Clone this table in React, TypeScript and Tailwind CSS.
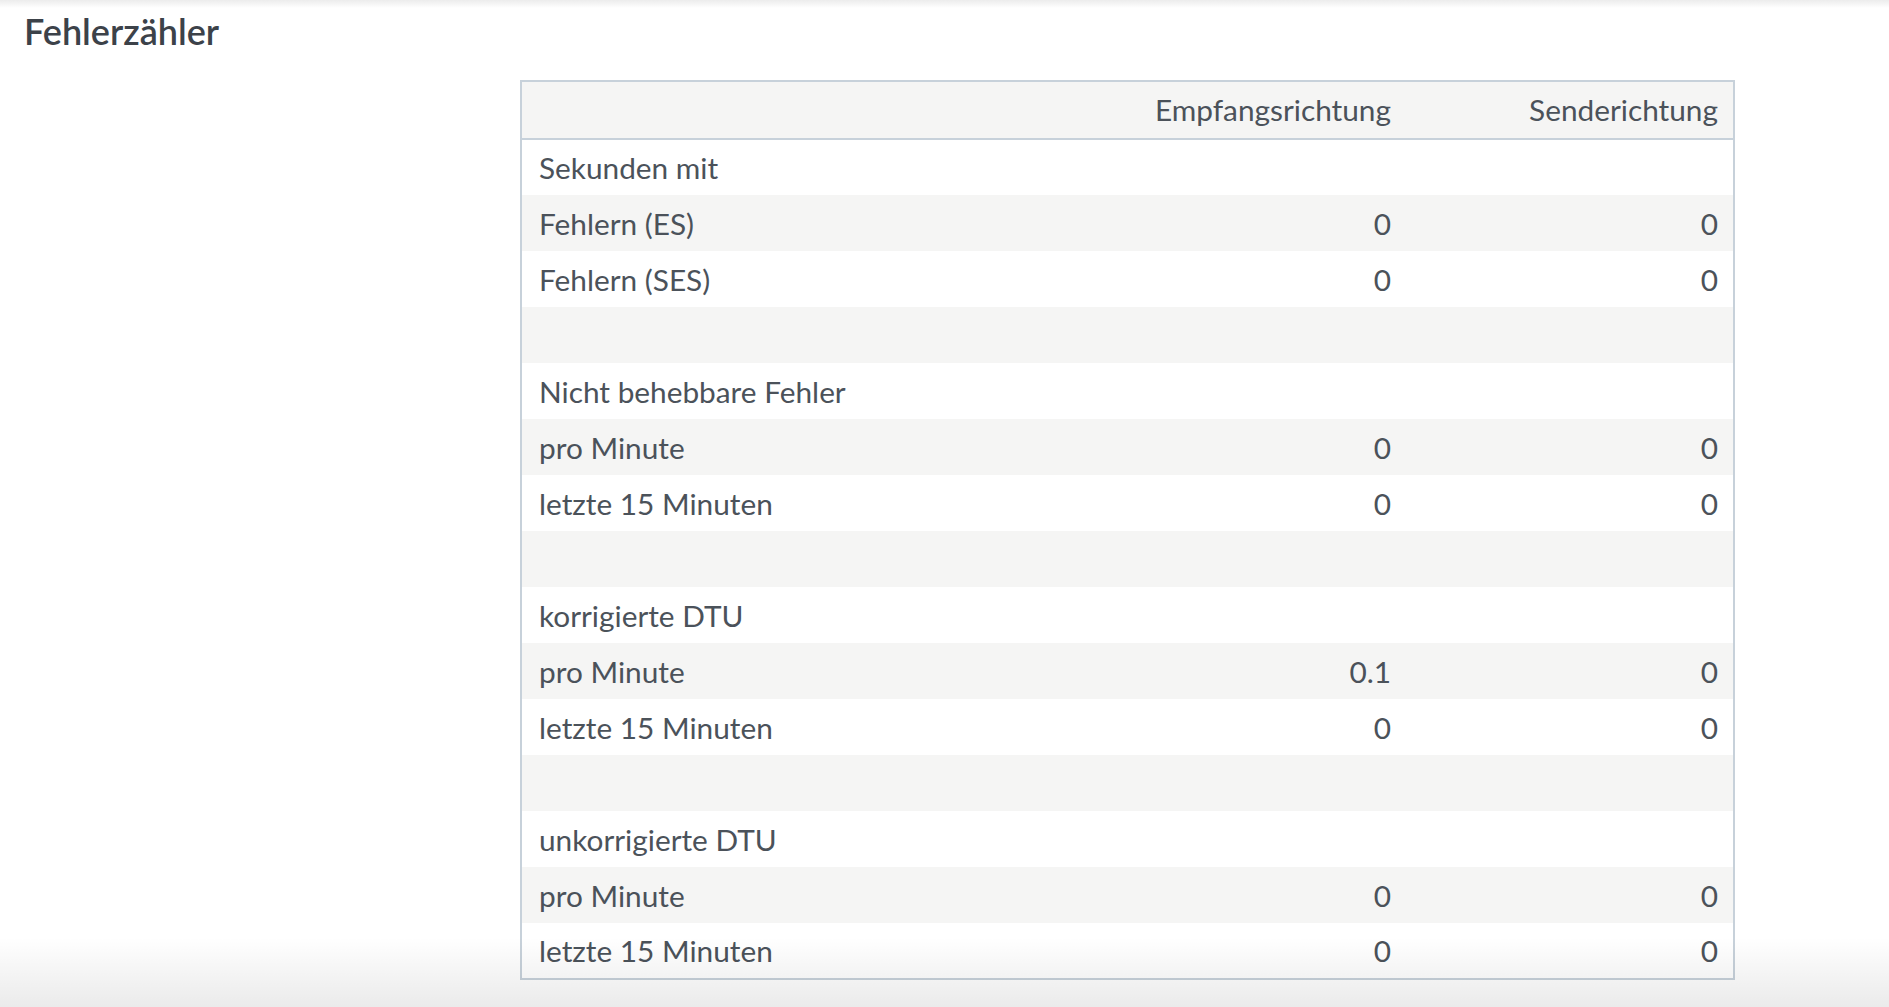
import React from 'react';

type Row = {
  label?: string;
  rx?: string;
  tx?: string;
};

const rows: Row[] = [
  { label: 'Sekunden mit' },
  { label: 'Fehlern (ES)', rx: '0', tx: '0' },
  { label: 'Fehlern (SES)', rx: '0', tx: '0' },
  {},
  { label: 'Nicht behebbare Fehler' },
  { label: 'pro Minute', rx: '0', tx: '0' },
  { label: 'letzte 15 Minuten', rx: '0', tx: '0' },
  {},
  { label: 'korrigierte DTU' },
  { label: 'pro Minute', rx: '0.1', tx: '0' },
  { label: 'letzte 15 Minuten', rx: '0', tx: '0' },
  {},
  { label: 'unkorrigierte DTU' },
  { label: 'pro Minute', rx: '0', tx: '0' },
  { label: 'letzte 15 Minuten', rx: '0', tx: '0' },
];

export default function App() {
  return (
    <div
      className="relative min-h-screen bg-white text-[#4b525a]"
      style={{ fontFamily: 'Lato, "Open Sans", sans-serif' }}
    >
      {/* header shadow */}
      <div className="h-[8px] bg-gradient-to-b from-[#ececec] to-white" />

      <h1 className="mt-[3px] px-6 text-[36px] leading-[40px] font-semibold text-[#3c4249]">
        Fehlerzähler
      </h1>

      <div className="grid grid-cols-[520px_1215px] pt-[29px]">
        <div />
        <table className="w-full border-collapse border-2 border-[#c7d1da] text-[29.8px] table-fixed">
          <colgroup>
            <col />
            <col className="w-[300px]" />
            <col className="w-[327px]" />
          </colgroup>
          <thead>
            <tr className="h-[58px] bg-[#f5f5f4] border-b-2 border-[#c7d1da]">
              <th className="px-4 font-normal" />
              <th className="px-4 font-normal text-right whitespace-nowrap">Empfangsrichtung</th>
              <th className="pl-4 pr-[15px] font-normal text-right whitespace-nowrap">Senderichtung</th>
            </tr>
          </thead>
          <tbody>
            {rows.map((r, i) => (
              <tr key={i} className={`h-[56px] ${i % 2 === 1 ? 'bg-[#f5f5f4]' : 'bg-white'}`}>
                <td className="pl-[17px] pr-4 pt-[2px] whitespace-nowrap">{r.label}</td>
                <td className="px-4 pt-[2px] text-right">{r.rx}</td>
                <td className="pl-4 pr-[15px] pt-[2px] text-right">{r.tx}</td>
              </tr>
            ))}
          </tbody>
        </table>
      </div>

      {/* footer shadow */}
      <div className="pointer-events-none absolute inset-x-0 bottom-0 h-[70px] bg-gradient-to-b from-transparent to-black/[0.08]" />
    </div>
  );
}
